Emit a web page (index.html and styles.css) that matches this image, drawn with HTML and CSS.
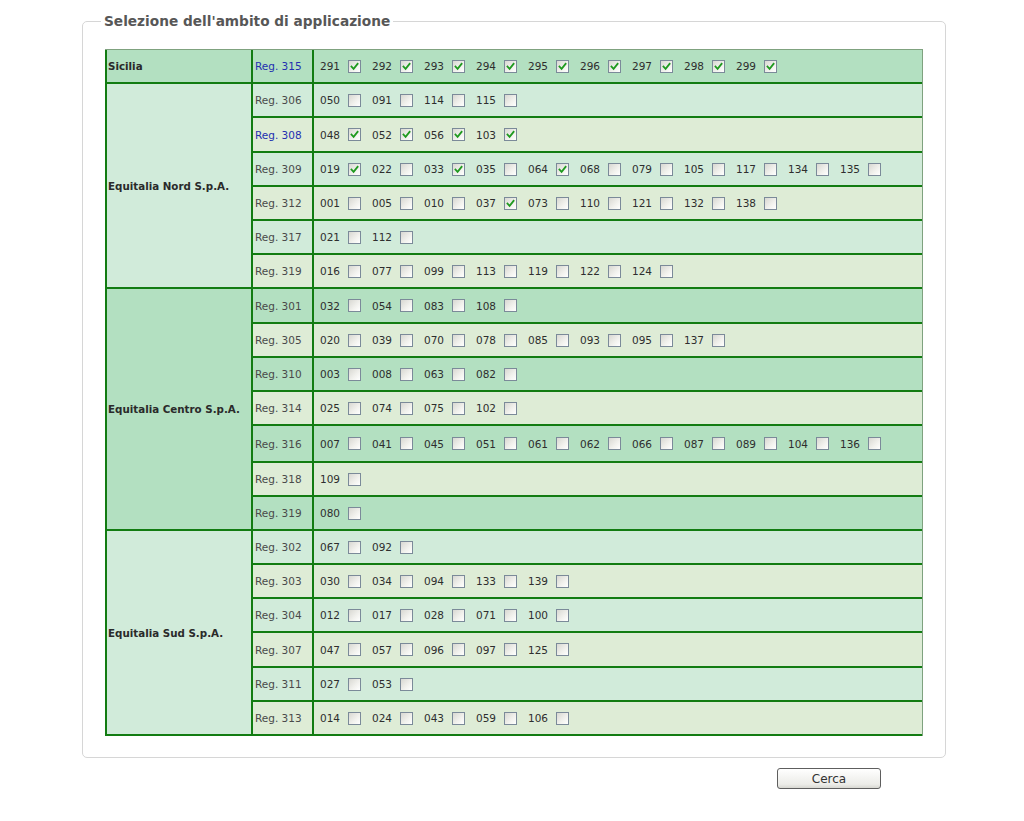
FILE: index.html
```html
<!DOCTYPE html>
<html lang="it">
<head>
<meta charset="utf-8">
<title>Selezione dell'ambito di applicazione</title>
<link rel="stylesheet" href="styles.css">
</head>
<body>
<div class="page">
<form class="form">
<fieldset class="box">
<legend class="legend">Selezione dell'ambito di applicazione</legend>
<table class="grid" id="grid"></table>
</fieldset>
<div class="actions"><button type="button" class="btn">Cerca</button></div>
</form>
</div>
<script src="app.js"></script>
</body>
</html>
```

FILE: app.js
```js
const data = [
  { name: "Sicilia", tone: "dark", regs: [
    { r: "315", link: true, items: "291* 292* 293* 294* 295* 296* 297* 298* 299*" }
  ]},
  { name: "Equitalia Nord S.p.A.", tone: "mint", regs: [
    { r: "306", items: "050 091 114 115" },
    { r: "308", link: true, h: 35, items: "048* 052* 056* 103*" },
    { r: "309", items: "019* 022 033* 035 064* 068 079 105 117 134 135" },
    { r: "312", items: "001 005 010 037* 073 110 121 132 138" },
    { r: "317", items: "021 112" },
    { r: "319", items: "016 077 099 113 119 122 124" }
  ]},
  { name: "Equitalia Centro S.p.A.", tone: "dark", regs: [
    { r: "301", h: 35, items: "032 054 083 108" },
    { r: "305", items: "020 039 070 078 085 093 095 137" },
    { r: "310", items: "003 008 063 082" },
    { r: "314", items: "025 074 075 102" },
    { r: "316", h: 37, items: "007 041 045 051 061 062 066 087 089 104 136" },
    { r: "318", items: "109" },
    { r: "319", items: "080" }
  ]},
  { name: "Equitalia Sud S.p.A.", tone: "mint", regs: [
    { r: "302", items: "067 092" },
    { r: "303", items: "030 034 094 133 139" },
    { r: "304", items: "012 017 028 071 100" },
    { r: "307", h: 35, items: "047 057 096 097 125" },
    { r: "311", items: "027 053" },
    { r: "313", items: "014 024 043 059 106" }
  ]}
];
const check = '<svg class="tick" viewBox="0 0 11 11" width="11" height="11"><path d="M2.5 5.5 L4.6 7.8 L8.6 2.8" fill="none" stroke="#1f9a1f" stroke-width="1.8" stroke-linecap="square"/></svg>';
const table = document.getElementById("grid");
let html = "<colgroup><col class='c1'><col class='c2'><col></colgroup><tbody>";
data.forEach(g => {
  g.regs.forEach((reg, i) => {
    const tone = i % 2 === 0 ? g.tone : "pale";
    const hc = reg.h ? " h" + reg.h : "";
    html += `<tr class="row ${tone}${hc}">`;
    if (i === 0) html += `<th class="grp ${g.tone}" rowspan="${g.regs.length}">${g.name}</th>`;
    html += `<td class="reg${reg.link ? " link" : ""}">Reg. ${reg.r}</td><td class="codes">`;
    reg.items.split(" ").forEach(it => {
      const on = it.endsWith("*");
      const code = it.replace("*", "");
      html += `<label class="item"><span class="num">${code}</span><span class="cb">${on ? check : ""}</span></label>`;
    });
    html += "</td></tr>";
  });
});
html += "</tbody>";
table.innerHTML = html;
```

FILE: styles.css
```css
html, body { margin: 0; padding: 0; background: #fff; }
body { font-family: "DejaVu Sans", Verdana, sans-serif; color: #333; }
.page { padding: 12px 0 0 82px; width: 864px; }
.form { margin: 0; }
.box {
  margin: 0;
  border: 1px solid #d6d6d6;
  border-radius: 5px;
  padding: 19px 22px 21px 22px;
  min-width: 0;
}
.legend {
  font-size: 13.7px;
  line-height: 18px;
  font-weight: bold;
  color: #575757;
  padding: 0 3px;
  margin-left: -4px;
}
.grid {
  width: 818px;
  border-collapse: separate;
  border-spacing: 0;
  border-top: 1px solid #7fa27f;
  border-right: 1px solid #7fa27f;
  font-size: 10.5px;
  table-layout: fixed;
}
.c1 { width: 146px; }
.c2 { width: 61px; }
.grid th, .grid td {
  border-left: 2px solid #127c12;
  border-bottom: 2px solid #127c12;
  padding: 0;
  box-sizing: border-box;
  white-space: nowrap;
}
.row { height: 34px; }
.row.h35 { height: 35px; }
.row.h37 { height: 37px; }
.dark { background: #b3e0c1; }
.mint { background: #d1ebda; }
.pale { background: #deecd6; }
.grp {
  text-align: left;
  font-size: 10.3px;
  font-weight: bold;
  color: #2a2a2a;
  padding-left: 1px !important;
  vertical-align: middle;
}
.reg { color: #4a4a4a; padding-left: 2px !important; }
.reg.link { color: #2430b0; }
.codes { padding-left: 6px !important; }
.item {
  display: inline-flex;
  align-items: center;
  width: 52px;
  vertical-align: middle;
}
.num { color: #2e2e2e; width: 21px; }
.cb {
  width: 11px;
  height: 11px;
  margin-left: 7px;
  border: 1px solid #7b8a99;
  background: linear-gradient(135deg, #d8d8d2 0%, #f2f2ee 60%, #ffffff 100%);
  display: inline-block;
  position: relative;
}
.tick { display: block; }
.actions {
  display: flex;
  justify-content: flex-end;
  padding-right: 65px;
  margin-top: 10px;
}
.btn {
  width: 104px;
  height: 21px;
  font-family: "DejaVu Sans", Verdana, sans-serif;
  font-size: 12px;
  color: #333;
  border: 1px solid #5e5e5e;
  border-radius: 3px;
  background: linear-gradient(#ffffff, #ecece8 80%, #d8d8d2);
  padding: 0;
}
```
